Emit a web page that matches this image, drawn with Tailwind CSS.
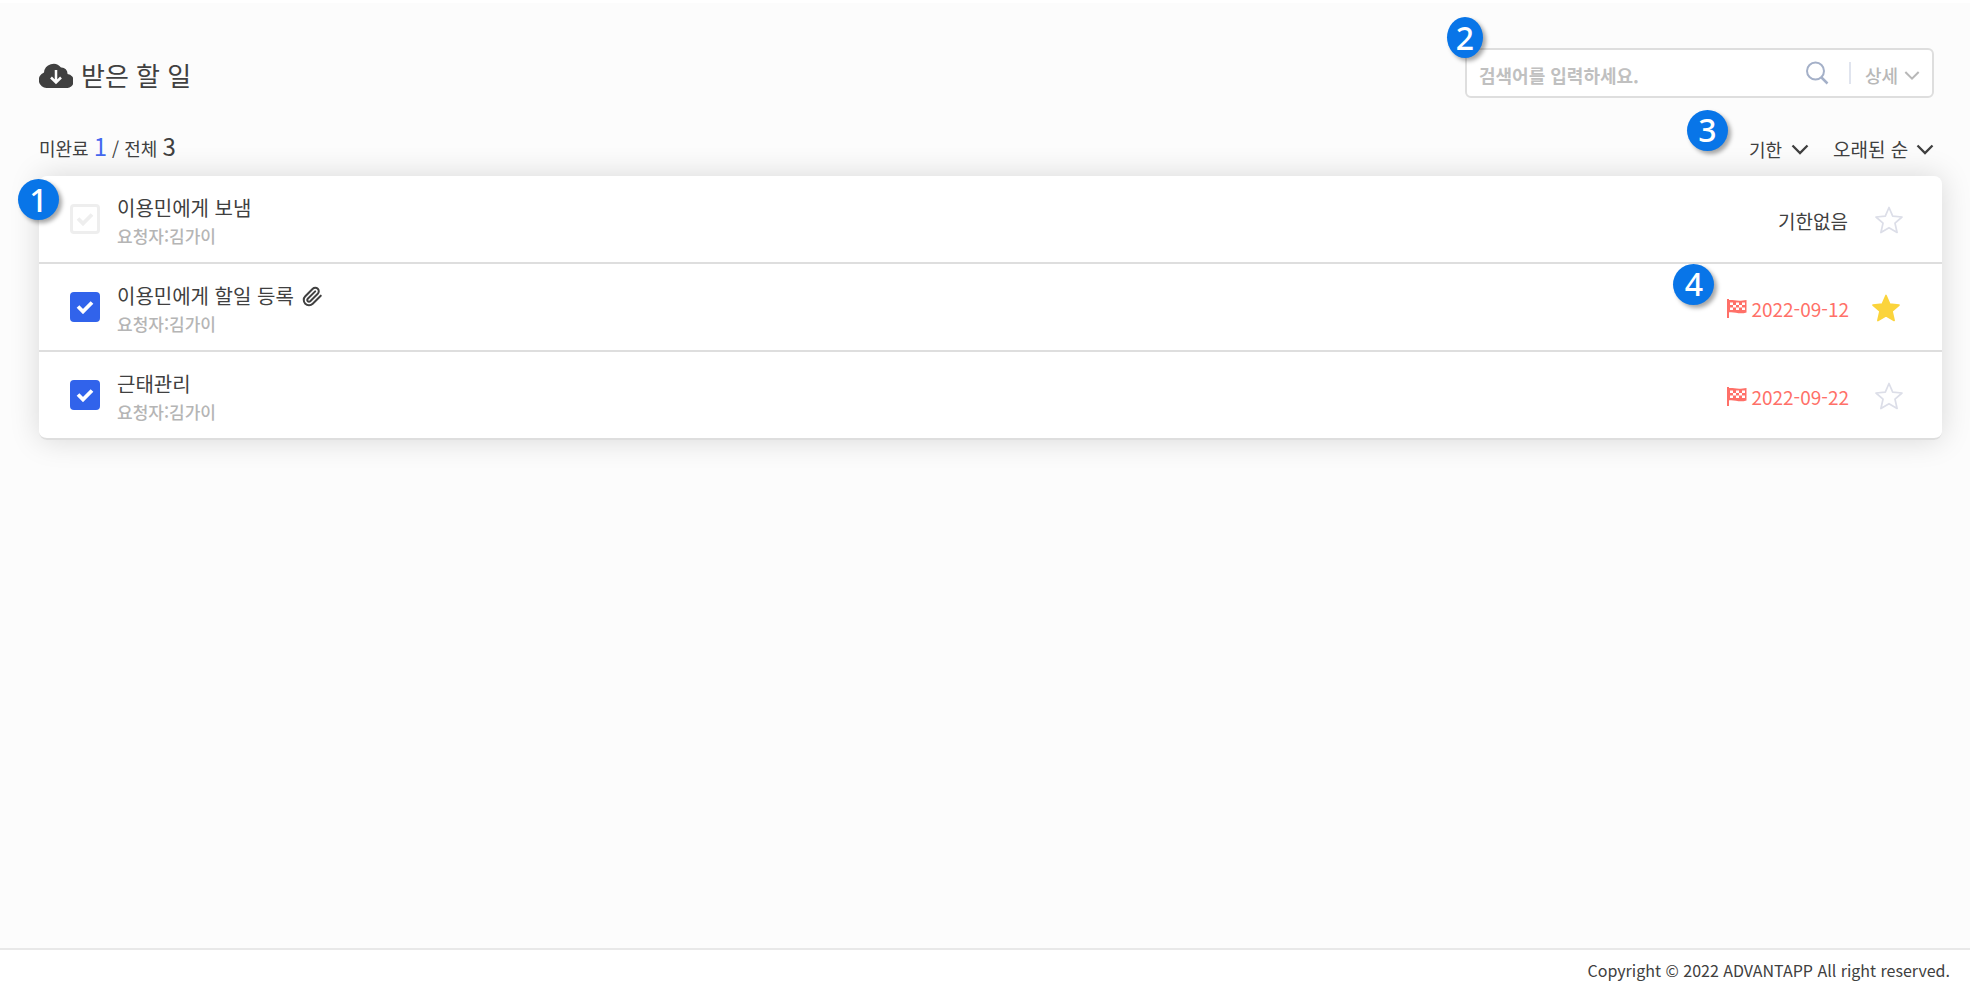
<!DOCTYPE html>
<html lang="ko">
<head>
<meta charset="utf-8">
<meta name="viewport" content="width=device-width, initial-scale=1">
<title>받은 할 일</title>
<script src="https://cdn.jsdelivr.net/npm/@tailwindcss/browser@4"></script>
</head>
<body class="flex min-h-screen flex-col border-t-3 border-white bg-[#fcfcfc] font-['Noto_Sans_CJK_KR',sans-serif] text-[#404040]">
<svg class="hidden">
  <symbol id="check" viewBox="0 0 18 14"><path d="M2 6.500l5 5L16 2.500" fill="none" stroke="currentColor" stroke-width="3.800"/></symbol>
  <symbol id="chevron" viewBox="0 0 18 11"><path d="M1.500 1.500L9 9l7.500-7.500" fill="none" stroke="currentColor" stroke-width="2.300"/></symbol>
  <symbol id="star" viewBox="0 0 28 28"><path d="M14 1.500l3.700 8.600 9.300.9-7 6.200 2.100 9.300-8.100-4.800-8.100 4.800L8 17.200 1 11l9.300-.9z" stroke="currentColor" stroke-width="1.700" stroke-linejoin="round"/></symbol>
  <symbol id="flag" viewBox="0 0 20 20"><path d="M1 0v19" stroke="currentColor" stroke-width="2"/><path d="M1 1.500c4-1.500 8 1.500 18.500-.5v12.500c-8 2.500-12-1.500-18.500 0z" fill="currentColor"/><path d="M3 3.500h3V6H3zM9 3.500h3V6H9zM15 3.500h3V6h-3zM6 6h3v2.500H6zM12 6h3v2.500h-3zM3 8.500h3V11H3zM9 8.500h3V11H9zM15 8.500h3V11h-3z" fill="#fff"/></symbol>
</svg>
<main class="flex-1 pl-[39px] pr-7">
  <header class="flex items-start justify-between pr-2 pt-[45px]">
    <h1 class="flex h-[54px] items-center gap-2 text-[26px] leading-[54px]">
      <svg class="h-[25px] w-[34px]" viewBox="0 0 34 25"><path d="M8 25a8 8 0 0 1-3-15.500A9.500 9.500 0 0 1 22 4.500a6 6 0 0 1 6.500 6.500A7 7 0 0 1 27 25z" fill="currentColor"/><path d="M17 7v12M12 14.500l5 5 5-5" fill="none" stroke="#fcfcfc" stroke-width="2.500"/></svg>
      받은 할 일
    </h1>
    <form class="relative flex h-[50px] w-[469px] items-center rounded-md border-2 border-[#dedede] bg-white px-3 text-[18px] font-bold text-[#b8b8b8]">
      <input type="text" aria-label="검색어" placeholder="검색어를 입력하세요." class="min-w-0 flex-1 pt-1 outline-none placeholder:text-[#c0c0c0]">
      <button type="button" aria-label="검색" class="mr-5 text-[#a4b0c8]"><svg class="size-6" viewBox="0 0 24 24" fill="none" stroke="currentColor"><circle cx="10.500" cy="10" r="8.500" stroke-width="2"/><path d="M16.500 16.500l6 6" stroke-width="2.500"/></svg></button>
      <span class="mr-[14px] h-[22px] w-0.5 bg-[#e0e4ee]"></span>
      <button type="button" class="flex items-center gap-1.5 pt-1 font-medium">상세<svg class="h-[11px] w-4"><use href="#chevron"/></svg></button>
      <span class="absolute -left-5 -top-[33px] flex h-[41px] w-9 items-center justify-center rounded-[50%] bg-[#0875e8] font-['Noto_Sans',sans-serif] text-[32px] font-medium leading-none text-white shadow-[3px_3px_4px_rgba(0,0,0,0.35)]">2</span>
    </form>
  </header>
  <div class="flex h-[74px] items-center justify-between pr-2 pt-4 text-[18px]">
    <p class="leading-8">미완료 <span class="text-[24px] text-[#4468f0]">1</span> / 전체 <span class="text-[24px]">3</span></p>
    <div class="relative flex gap-6 pt-1">
      <span class="absolute -left-[62px] -top-[21px] flex size-[41px] items-center justify-center rounded-full bg-[#0875e8] font-['Noto_Sans',sans-serif] text-[32px] font-medium leading-none text-white shadow-[3px_3px_4px_rgba(0,0,0,0.35)]">3</span>
      <label class="flex items-center gap-2"><select aria-label="정렬 기준" class="appearance-none"><option>기한</option></select><svg class="h-[11px] w-[18px]"><use href="#chevron"/></svg></label>
      <label class="flex items-center gap-2"><select aria-label="정렬 순서" class="appearance-none text-[19px]"><option>오래된 순</option></select><svg class="h-[11px] w-[18px]"><use href="#chevron"/></svg></label>
    </div>
  </div>
  <div class="relative">
    <ul class="rounded-lg bg-white shadow-[0_0_30px_rgba(0,0,0,0.15)]">
      <li class="flex h-[88px] items-center border-b-2 border-[#dedede] pl-[31px] pr-[39px]">
        <span class="relative mr-[17px] size-[30px] text-[#eee]"><input type="checkbox" aria-label="이용민에게 보냄" class="block size-[30px] appearance-none rounded border-3 border-[#eee] bg-white"><svg class="pointer-events-none absolute left-[6px] top-2 h-[14px] w-[18px]"><use href="#check"/></svg></span>
        <div class="flex-1 pt-1.5"><p class="text-[20px] leading-7">이용민에게 보냄</p><p class="text-[17px] font-medium leading-7 text-[#b5b5b5]">요청자:김가이</p></div>
        <span class="mr-[27px] pt-1 text-[19px]">기한없음</span>
        <button type="button" aria-label="중요 표시" class="pt-0.5 text-[#dcdee8]"><svg class="size-7 fill-none"><use href="#star"/></svg></button>
      </li>
      <li class="flex h-[88px] items-center border-b-2 border-[#dedede] pl-[31px] pr-[39px]">
        <span class="relative mr-[17px] size-[30px] text-white"><input type="checkbox" checked aria-label="이용민에게 할일 등록" class="block size-[30px] appearance-none rounded bg-[#3163eb]"><svg class="pointer-events-none absolute left-[6px] top-2 h-[14px] w-[18px]"><use href="#check"/></svg></span>
        <div class="flex-1 pt-1.5"><p class="flex items-center gap-2 text-[20px] leading-7">이용민에게 할일 등록 <svg class="size-[21px]" viewBox="0 0 24 24" fill="none" stroke="currentColor" stroke-width="2.300" stroke-linecap="round"><path d="M21.440 11.050l-9.190 9.190a6 6 0 0 1-8.490-8.490l8.570-8.570A4 4 0 1 1 18 8.840l-8.590 8.570a2 2 0 0 1-2.830-2.830l8.490-8.480"/></svg></p><p class="text-[17px] font-medium leading-7 text-[#b5b5b5]">요청자:김가이</p></div>
        <span class="relative mr-[23px] flex items-center gap-1 pt-1 text-[19px] text-[#ff7068]"><svg class="size-5"><use href="#flag"/></svg>2022-09-12
          <span class="absolute -left-[54px] -top-[27px] flex size-[41px] items-center justify-center rounded-full bg-[#0875e8] font-['Noto_Sans',sans-serif] text-[32px] font-medium leading-none text-white shadow-[3px_3px_4px_rgba(0,0,0,0.35)]">4</span></span>
        <button type="button" aria-label="중요 표시 해제" class="mr-[3px] pt-0.5 text-[#fbd43c]"><svg class="size-7 fill-current"><use href="#star"/></svg></button>
      </li>
      <li class="flex h-[88px] items-center rounded-b-lg border-b-2 border-[#dedede] pl-[31px] pr-[39px]">
        <span class="relative mr-[17px] size-[30px] text-white"><input type="checkbox" checked aria-label="근태관리" class="block size-[30px] appearance-none rounded bg-[#3163eb]"><svg class="pointer-events-none absolute left-[6px] top-2 h-[14px] w-[18px]"><use href="#check"/></svg></span>
        <div class="flex-1 pt-1.5"><p class="text-[20px] leading-7">근태관리</p><p class="text-[17px] font-medium leading-7 text-[#b5b5b5]">요청자:김가이</p></div>
        <span class="mr-[26px] flex items-center gap-1 pt-1 text-[19px] text-[#ff7068]"><svg class="size-5"><use href="#flag"/></svg>2022-09-22</span>
        <button type="button" aria-label="중요 표시" class="pt-0.5 text-[#dcdee8]"><svg class="size-7 fill-none"><use href="#star"/></svg></button>
      </li>
    </ul>
    <span class="absolute -left-[21px] top-[3px] flex size-[41px] items-center justify-center rounded-full bg-[#0875e8] font-['Noto_Sans',sans-serif] text-[32px] font-medium leading-none text-white shadow-[3px_3px_4px_rgba(0,0,0,0.35)]">1</span>
  </div>
</main>
<footer class="h-[38px] border-t-2 border-[#e8e8e8] bg-white pr-5 pt-1 text-right text-[16px] leading-8">Copyright © 2022 ADVANTAPP All right reserved.</footer>
</body>
</html>
